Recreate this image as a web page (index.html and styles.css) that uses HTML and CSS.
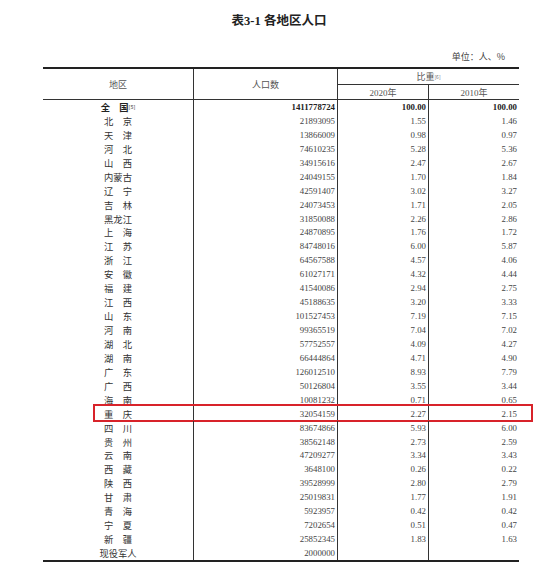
FILE: index.html
```html
<!DOCTYPE html>
<html lang="zh">
<head>
<meta charset="utf-8">
<link rel="stylesheet" href="styles.css">
</head>
<body>
<div class="page">
  <h1 class="title">表3-1 各地区人口</h1>
  <div class="unit">单位：人、%</div>
  <div class="tbl">
    <div class="head">
      <div class="h h-region">地区</div>
      <div class="h h-pop">人口数</div>
      <div class="h h-share">比重<sup>[6]</sup></div>
      <div class="h h-y1">2020年</div>
      <div class="h h-y2">2010年</div>
    </div>
    <div class="body">
      <div class="row total"><div class="c name">全　国<sup>[5]</sup></div><div class="c num pop">1411778724</div><div class="c num y1">100.00</div><div class="c num y2">100.00</div></div>
      <div class="row"><div class="c name">北　京</div><div class="c num pop">21893095</div><div class="c num y1">1.55</div><div class="c num y2">1.46</div></div>
      <div class="row"><div class="c name">天　津</div><div class="c num pop">13866009</div><div class="c num y1">0.98</div><div class="c num y2">0.97</div></div>
      <div class="row"><div class="c name">河　北</div><div class="c num pop">74610235</div><div class="c num y1">5.28</div><div class="c num y2">5.36</div></div>
      <div class="row"><div class="c name">山　西</div><div class="c num pop">34915616</div><div class="c num y1">2.47</div><div class="c num y2">2.67</div></div>
      <div class="row"><div class="c name">内蒙古</div><div class="c num pop">24049155</div><div class="c num y1">1.70</div><div class="c num y2">1.84</div></div>
      <div class="row"><div class="c name">辽　宁</div><div class="c num pop">42591407</div><div class="c num y1">3.02</div><div class="c num y2">3.27</div></div>
      <div class="row"><div class="c name">吉　林</div><div class="c num pop">24073453</div><div class="c num y1">1.71</div><div class="c num y2">2.05</div></div>
      <div class="row"><div class="c name">黑龙江</div><div class="c num pop">31850088</div><div class="c num y1">2.26</div><div class="c num y2">2.86</div></div>
      <div class="row"><div class="c name">上　海</div><div class="c num pop">24870895</div><div class="c num y1">1.76</div><div class="c num y2">1.72</div></div>
      <div class="row"><div class="c name">江　苏</div><div class="c num pop">84748016</div><div class="c num y1">6.00</div><div class="c num y2">5.87</div></div>
      <div class="row"><div class="c name">浙　江</div><div class="c num pop">64567588</div><div class="c num y1">4.57</div><div class="c num y2">4.06</div></div>
      <div class="row"><div class="c name">安　徽</div><div class="c num pop">61027171</div><div class="c num y1">4.32</div><div class="c num y2">4.44</div></div>
      <div class="row"><div class="c name">福　建</div><div class="c num pop">41540086</div><div class="c num y1">2.94</div><div class="c num y2">2.75</div></div>
      <div class="row"><div class="c name">江　西</div><div class="c num pop">45188635</div><div class="c num y1">3.20</div><div class="c num y2">3.33</div></div>
      <div class="row"><div class="c name">山　东</div><div class="c num pop">101527453</div><div class="c num y1">7.19</div><div class="c num y2">7.15</div></div>
      <div class="row"><div class="c name">河　南</div><div class="c num pop">99365519</div><div class="c num y1">7.04</div><div class="c num y2">7.02</div></div>
      <div class="row"><div class="c name">湖　北</div><div class="c num pop">57752557</div><div class="c num y1">4.09</div><div class="c num y2">4.27</div></div>
      <div class="row"><div class="c name">湖　南</div><div class="c num pop">66444864</div><div class="c num y1">4.71</div><div class="c num y2">4.90</div></div>
      <div class="row"><div class="c name">广　东</div><div class="c num pop">126012510</div><div class="c num y1">8.93</div><div class="c num y2">7.79</div></div>
      <div class="row"><div class="c name">广　西</div><div class="c num pop">50126804</div><div class="c num y1">3.55</div><div class="c num y2">3.44</div></div>
      <div class="row"><div class="c name">海　南</div><div class="c num pop">10081232</div><div class="c num y1">0.71</div><div class="c num y2">0.65</div></div>
      <div class="row marked"><div class="c name">重　庆</div><div class="c num pop">32054159</div><div class="c num y1">2.27</div><div class="c num y2">2.15</div><div class="mark"></div></div>
      <div class="row"><div class="c name">四　川</div><div class="c num pop">83674866</div><div class="c num y1">5.93</div><div class="c num y2">6.00</div></div>
      <div class="row"><div class="c name">贵　州</div><div class="c num pop">38562148</div><div class="c num y1">2.73</div><div class="c num y2">2.59</div></div>
      <div class="row"><div class="c name">云　南</div><div class="c num pop">47209277</div><div class="c num y1">3.34</div><div class="c num y2">3.43</div></div>
      <div class="row"><div class="c name">西　藏</div><div class="c num pop">3648100</div><div class="c num y1">0.26</div><div class="c num y2">0.22</div></div>
      <div class="row"><div class="c name">陕　西</div><div class="c num pop">39528999</div><div class="c num y1">2.80</div><div class="c num y2">2.79</div></div>
      <div class="row"><div class="c name">甘　肃</div><div class="c num pop">25019831</div><div class="c num y1">1.77</div><div class="c num y2">1.91</div></div>
      <div class="row"><div class="c name">青　海</div><div class="c num pop">5923957</div><div class="c num y1">0.42</div><div class="c num y2">0.42</div></div>
      <div class="row"><div class="c name">宁　夏</div><div class="c num pop">7202654</div><div class="c num y1">0.51</div><div class="c num y2">0.47</div></div>
      <div class="row"><div class="c name">新　疆</div><div class="c num pop">25852345</div><div class="c num y1">1.83</div><div class="c num y2">1.63</div></div>
      <div class="row"><div class="c name">现役军人</div><div class="c num pop">2000000</div><div class="c num y1"></div><div class="c num y2"></div></div>
    </div>
  </div>
</div>
</body>
</html>
```

FILE: styles.css
```css
html, body {
  margin: 0;
  padding: 0;
  background: #ffffff;
}

.page {
  width: 550px;
  height: 566px;
  overflow: hidden;
  font-family: "Liberation Serif", "Noto Sans CJK SC", serif;
  color: #333;
}

.title {
  margin: 0;
  padding-top: 13px;
  height: 20px;
  text-align: center;
  font-size: 12.5px;
  line-height: 17px;
  font-weight: bold;
  color: #222;
  padding-left: 8px;
}

.unit {
  margin-top: 18px;
  height: 11px;
  line-height: 11px;
  font-size: 9px;
  text-align: right;
  padding-right: 45px;
  color: #444;
  font-family: "Noto Sans CJK SC", sans-serif;
}

.tbl {
  margin-top: 5px;
  margin-left: 43px;
  width: 476px;
  border-top: 2px solid #222;
  border-bottom: 2px solid #222;
}

.head {
  display: grid;
  grid-template-columns: 151px 144px 91px 90px;
  grid-template-rows: 16px 15px;
  border-bottom: 1px solid #333;
  box-sizing: border-box;
  height: 31px;
}

.h {
  display: flex;
  align-items: center;
  justify-content: center;
  font-family: "Noto Sans CJK SC", sans-serif;
  font-size: 9px;
  color: #555;
  box-sizing: border-box;
}

.h-region {
  grid-column: 1;
  grid-row: 1 / 3;
  border-right: 1px solid #333;
}

.h-pop {
  grid-column: 2;
  grid-row: 1 / 3;
  border-right: 1px solid #333;
}

.h-share {
  grid-column: 3 / 5;
  grid-row: 1;
  border-bottom: 1px solid #333;
}

.h-y1 {
  grid-column: 3;
  grid-row: 2;
  border-right: 1px solid #333;
  font-family: "Liberation Serif", "Noto Sans CJK SC", serif;
}

.h-y2 {
  grid-column: 4;
  grid-row: 2;
  font-family: "Liberation Serif", "Noto Sans CJK SC", serif;
}

sup {
  font-size: 5px;
  line-height: 0;
  vertical-align: 4px;
  color: #777;
}

.row {
  display: grid;
  grid-template-columns: 151px 144px 91px 90px;
  height: 13.94px;
  position: relative;
}

.c {
  box-sizing: border-box;
  height: 100%;
  display: flex;
  align-items: center;
  white-space: nowrap;
}

.name {
  justify-content: center;
  font-family: "Noto Sans CJK SC", sans-serif;
  font-size: 9.3px;
  color: #333;
  border-right: 1px solid #333;
}

.num {
  justify-content: flex-end;
  font-size: 8.8px;
  color: #444;
}

.pop {
  padding-right: 2px;
  border-right: 1px solid #333;
}

.y1 {
  padding-right: 2px;
  border-right: 1px solid #333;
}

.y2 {
  padding-right: 2px;
}

.total .c {
  font-weight: bold;
  color: #222;
}

.mark {
  position: absolute;
  left: 50px;
  top: -3px;
  width: 440px;
  height: 18px;
  border: 2px solid #d8232a;
  box-sizing: border-box;
  pointer-events: none;
}
```
